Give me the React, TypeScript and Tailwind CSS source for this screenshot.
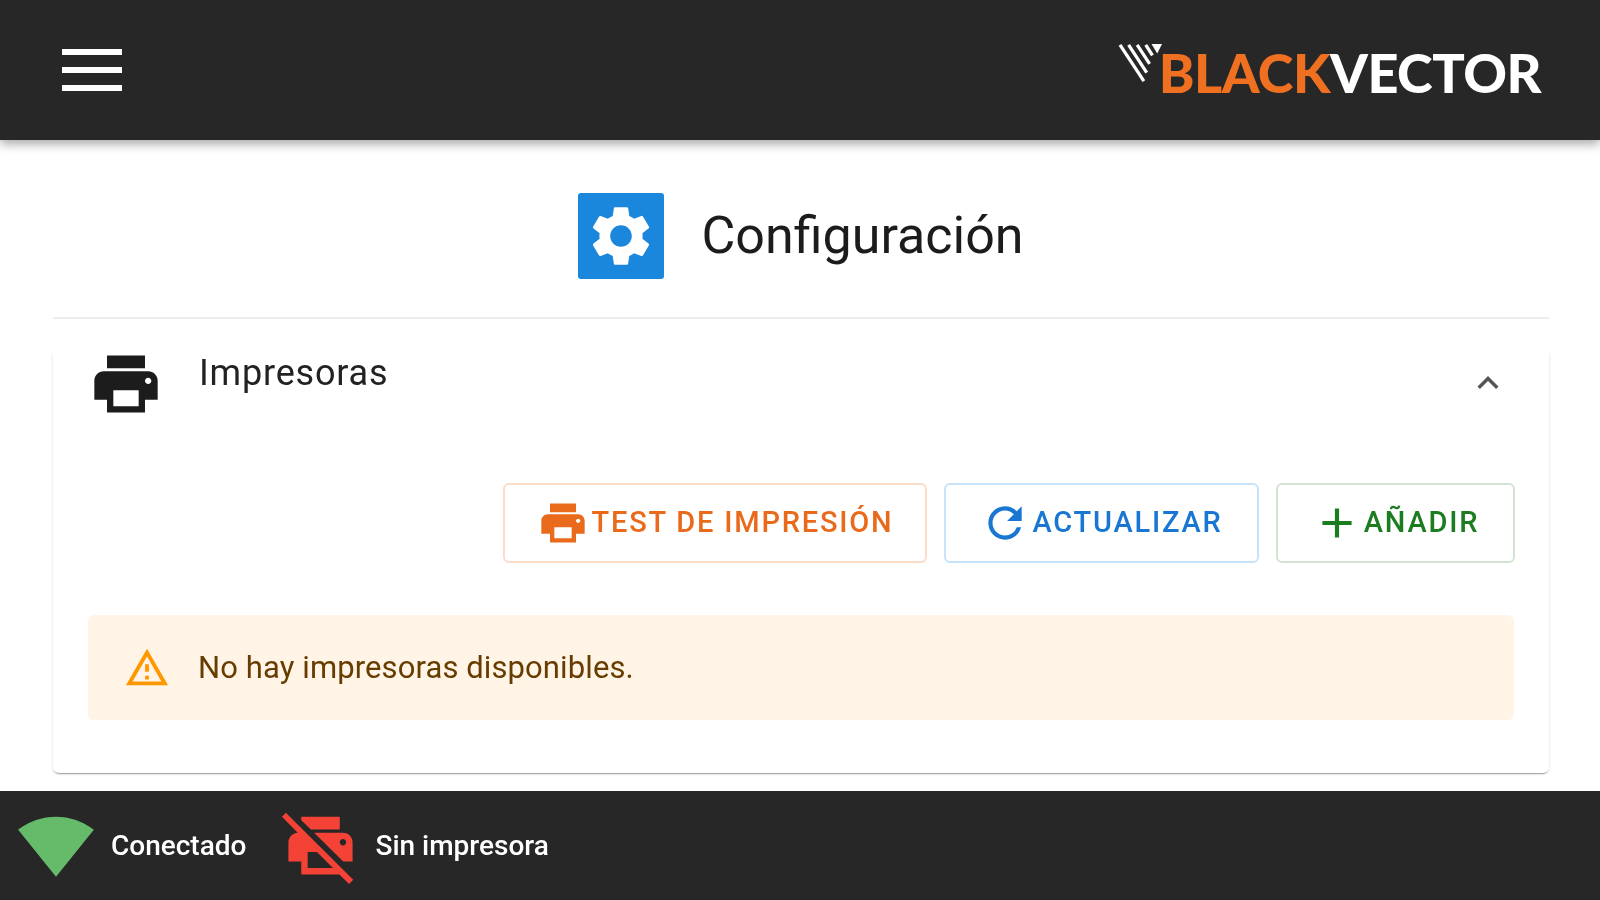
import {
  MdAdd,
  MdExpandLess,
  MdOutlineWarningAmber,
  MdPrint,
  MdPrintDisabled,
  MdRefresh,
  MdSettings,
  MdSignalWifi4Bar,
} from 'react-icons/md'

const LogoMark = () => (
  <svg viewBox="0 0 48 44" className="w-[46px] h-[42px] shrink-0 mb-[16px] -mr-[5px]">
    <g stroke="#fff" strokeWidth="3.4" fill="none">
      <path d="M2 3 L27 41" />
      <path d="M11 3 L30 32" />
      <path d="M20 3 L33 23" />
      <path d="M29 3 L36 14" />
    </g>
    <path d="M35 2 L46 2 L41 12 Z" fill="#fff" />
  </svg>
)

const MenuIcon = () => (
  <svg viewBox="0 0 60 42" className="w-[60px] h-[42px] text-white fill-current">
    <rect x="0" y="0" width="60" height="6" />
    <rect x="0" y="18" width="60" height="6" />
    <rect x="0" y="36" width="60" height="6" />
  </svg>
)

const App = () => {
  return (
    <div className="h-screen flex flex-col bg-white overflow-hidden font-['Roboto',sans-serif] blur-[0.6px]">
      <header className="h-[140px] shrink-0 bg-[#272727] flex items-center justify-between pl-[62px] pr-[59px] shadow-[0_4px_10px_rgba(0,0,0,0.35)] z-10">
        <MenuIcon />
        <div className="flex items-end font-['Lato',sans-serif] font-black text-[54px] leading-none tracking-[-0.5px] mt-[2px]">
          <LogoMark />
          <span className="text-[#f07021]">BLACK</span>
          <span className="text-white">VECTOR</span>
        </div>
      </header>

      <main className="flex-1 min-h-0 pl-[53px] pr-[51px] flex flex-col">
        <div className="h-[179px] shrink-0 pt-[15px] border-b-2 border-[#ececec] flex items-center justify-center gap-[37px]">
          <div className="w-[86px] h-[86px] rounded-[3px] bg-[#1a86dc] flex items-center justify-center">
            <MdSettings className="w-[72px] h-[72px] text-white" />
          </div>
          <h1 className="text-[52px] leading-none font-normal text-[#1c1c1c]">Configuración</h1>
        </div>

        <section className="mt-[33px] h-[421px] rounded-b-[6px] bg-white shadow-[0_2px_1px_-1px_rgba(0,0,0,0.3),0_1px_3px_0_rgba(0,0,0,0.15)] [clip-path:inset(0_-10px_-10px_-10px)] pl-[35px] pr-[34px]">
          <div className="h-[131px] flex items-start">
            <MdPrint className="w-[76px] h-[76px] text-[#1c1c1c] -mt-[6px] mr-[35px] shrink-0" />
            <span className="text-[36px] leading-none tracking-[0.8px] text-[#222] mt-[3px] flex-1">Impresoras</span>
            <MdExpandLess className="w-[42px] h-[42px] text-[#555] mt-[10px] mr-[6px]" />
          </div>

          <div className="flex justify-end gap-[17px]">
            <button className="w-[424px] h-[80px] rounded-[6px] border-2 border-[#fadcc8] flex items-center justify-center text-[#ea6a1c] text-[29px] font-medium tracking-[1.8px]">
              <MdPrint className="w-[52px] h-[52px] shrink-0" />
              <span className="ml-[3px]">TEST DE IMPRESIÓN</span>
            </button>
            <button className="w-[315px] h-[80px] rounded-[6px] border-2 border-[#c8e2f7] flex items-center justify-center text-[#1976d2] text-[29px] font-medium tracking-[1.8px]">
              <MdRefresh className="w-[50px] h-[50px] shrink-0" />
              <span className="ml-[2px]">ACTUALIZAR</span>
            </button>
            <button className="w-[239px] h-[80px] rounded-[6px] border-2 border-[#d3e3d3] flex items-center justify-center text-[#1b7d20] text-[29px] font-medium tracking-[1.8px]">
              <MdAdd className="w-[50px] h-[50px] shrink-0" />
              <span className="ml-[2px]">AÑADIR</span>
            </button>
          </div>

          <div className="mt-[52px] mr-[1px] h-[105px] rounded-[6px] bg-[#fff4e5] flex items-center pl-[36px] gap-[28px] text-[#663c00]">
            <MdOutlineWarningAmber className="w-[46px] h-[46px] text-[#ff9800] shrink-0" />
            <span className="text-[31px] leading-none tracking-[0.1px]">No hay impresoras disponibles.</span>
          </div>
        </section>
      </main>

      <footer className="h-[109px] shrink-0 bg-[#272727] flex items-center pl-[17px] text-white text-[28px] font-medium">
        <MdSignalWifi4Bar className="w-[78px] h-[78px] text-[#66bb6a] shrink-0" />
        <span className="ml-[16px]">Conectado</span>
        <MdPrintDisabled className="w-[77px] h-[77px] text-[#f44336] shrink-0 ml-[36px]" />
        <span className="ml-[16px]">Sin impresora</span>
      </footer>
    </div>
  )
}

export default App
